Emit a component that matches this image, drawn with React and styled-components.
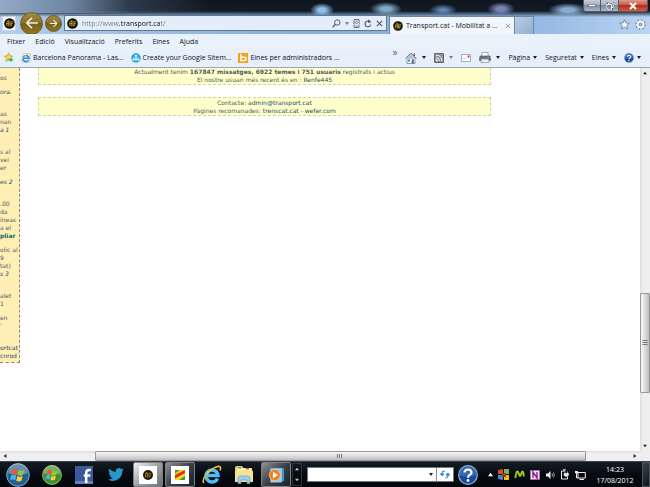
import styled, { createGlobalStyle, css } from "styled-components";

const GlobalStyle = createGlobalStyle`
    * {
        box-sizing: border-box;
    }

    body {
        margin: 0;
        overflow: hidden;
        color: #10141e;
        font-family: "Open Sans", "Noto Sans", sans-serif;
        font-size: 7px;
        line-height: 10px;
    }

    button, input {
        margin: 0;
        padding: 0;
        border: 0;
        color: inherit;
        background: none;
        font: inherit;
    }

    a {
        color: inherit;
        text-decoration: none;
    }

    svg {
        display: block;
        flex: none;
    }
`;

const Screen = styled.div`
    display: flex;
    flex-direction: column;
    min-height: 100vh;
`;

const Frame = styled.header`
    height: 34px;
    background:
        radial-gradient(ellipse 12px 7px at 322px 10px, #8fc1ee 30%, transparent),
        radial-gradient(ellipse 16px 7px at 386px 9px, #7fa9c4 30%, transparent),
        radial-gradient(ellipse 14px 6px at 443px 10px, #5d87b4 20%, transparent),
        radial-gradient(ellipse 14px 7px at 501px 9px, #7585b4 30%, transparent),
        radial-gradient(ellipse 20px 7px at 568px 10px, #88aad2 30%, transparent),
        linear-gradient(90deg, #93aac6, #6f86a3 70px, #4a5c7480 130px, transparent 210px) 0 0 / 100% 13px no-repeat,
        linear-gradient(#10161f 0, #121a26 11px, transparent 17px),
        linear-gradient(90deg, #b3cdea, #86aed8 45%, #8fb5e0 80%, #b9d4f1);
`;

const WindowButtons = styled.div`
    display: flex;
    justify-content: flex-end;
    height: 12px;
    padding-right: 2px;
`;

const WindowButton = styled.button`
    display: flex;
    align-items: center;
    justify-content: center;
    width: ${props => props.$close ? 29 : 18}px;
    height: 12px;
    border: 1px solid #4d5a6b;
    border-top: 0;
    border-left-width: ${props => props.$first ? 1 : 0}px;
    border-radius: ${props => props.$first ? "0 0 0 3px" : props.$close ? "0 0 3px 0" : "0"};
    background: ${props => props.$close
        ? "linear-gradient(#dd9a8d, #c75543 50%, #b5301c 50%, #d5593e)"
        : "linear-gradient(#c4ccd6, #a3adba 50%, #7d8a9a 50%, #a9b8c8)"};
`;

const NavRow = styled.div`
    display: flex;
    align-items: center;
    height: 22px;
    padding-left: 2px;
`;

const SiteButton = styled.button`
    display: flex;
    align-items: center;
    justify-content: center;
    width: 14px;
    height: 15px;
    background: #f4f7fb;
    border: 1px solid #c9d4e2;
`;

const RoundButton = styled.button`
    display: flex;
    align-items: center;
    justify-content: center;
    flex: none;
    width: ${props => props.$size}px;
    height: ${props => props.$size}px;
    margin-left: ${props => props.$size > 20 ? 4 : 2}px;
    border: 1px solid #6c5c2a;
    border-radius: 50%;
    background: linear-gradient(#a08a48, #8a7128 50%, #7a6015 50%, #8f7426);
`;

const AddressBar = styled.form`
    display: flex;
    align-items: center;
    flex: 1;
    gap: 4px;
    height: 16px;
    margin-left: 2px;
    padding: 0 3px 0 2px;
    border: 1px solid #5f7896;
    background: #e4eefa;
`;

const AddressInput = styled.input`
    flex: 1;
    min-width: 0;
    height: 14px;
    outline: none;
    color: transparent;
    caret-color: #111;
    background: linear-gradient(90deg, #737a84 37px, #0b0d12 37px, #0b0d12 79px, #737a84 79px);
    background-clip: text;
`;

const IconButton = styled.button`
    display: flex;
    align-items: center;
    justify-content: center;
`;

const TabStrip = styled.div`
    display: flex;
    align-items: flex-end;
    align-self: flex-end;
    width: 263px;
    height: 18px;
    padding-left: 2px;
`;

const Tab = styled.div`
    display: flex;
    align-items: center;
    gap: 3px;
    width: 126px;
    height: 18px;
    padding: 0 3px;
    border: 1px solid #6d86a5;
    border-bottom: 0;
    background: #f1f6fd;
    white-space: nowrap;
`;

const TabTitle = styled.span`
    flex: 1;
`;

const NewTab = styled.button`
    width: 19px;
    height: 18px;
    border: 1px solid #6d86a5;
    border-width: 1px 1px 0 0;
    background: linear-gradient(135deg, #b9cde4, #93aecd);
`;

const FrameTools = styled.div`
    display: flex;
    align-items: center;
    gap: 5px;
    height: 18px;
    margin-left: auto;
    padding: 0 4px 2px 0;
`;

const MenuBar = styled.nav`
    display: flex;
    align-items: center;
    gap: 10px;
    height: 16px;
    padding-left: 7px;
    background: #e9f1fb;
`;

const CommandRow = styled.div`
    display: flex;
    align-items: center;
    height: 18px;
    padding: 0 9px 2px 4px;
    border-bottom: 1px solid #9ba7b7;
    background: #e6effa;
    white-space: nowrap;
`;

const Favorites = styled.div`
    display: flex;
    align-items: center;
    flex: 1;
    gap: 7px;
`;

const Favorite = styled.a`
    display: flex;
    align-items: center;
    gap: 2px;
`;

const More = styled.button`
    align-self: flex-start;
    margin: -5px 8px 0 auto;
    color: #4b63a8;
    font-size: 10px;
`;

const Commands = styled.div`
    display: flex;
    align-items: center;
    gap: 8px;
`;

const Command = styled.button`
    display: flex;
    align-items: center;
    gap: ${props => props.$wide ? 5 : 3}px;
`;

const Caret = styled.span`
    border: 2px solid transparent;
    border-top: 3px solid ${props => props.$muted ? "#7a8088" : "#1a1f2b"};
    border-bottom: 0;
`;

const Viewport = styled.div`
    display: grid;
    grid-template-columns: 1fr 10px;
    grid-template-rows: 1fr 10px;
    flex: 1;
    background: #eeeeee;
`;

const Page = styled.div`
    display: flex;
    align-items: flex-start;
    min-width: 0;
    background: #ffffff;
    color: #4f5866;
    font-family: "DejaVu Sans", sans-serif;
    font-size: 6px;
    line-height: 8px;

    a {
        color: #134c6b;
    }
`;

const Sidebar = styled.aside`
    display: flex;
    flex-direction: column;
    width: 20px;
    padding: 6px 0 2px;
    overflow: hidden;
    border: 1px dashed #8f8a78;
    border-width: 0 1px 1px 0;
    background: #ffefb5;
    white-space: nowrap;
`;

const Paragraph = styled.div`
    margin-bottom: ${props => props.$spaced ? 14 : 6}px;

    &:last-child {
        margin-bottom: 0;
    }
`;

const Line = styled.div`
    height: 8px;

    ${props => props.$kind === "title" && css`
        color: #134c6b;
        font-style: italic;
    `}

    ${props => props.$kind === "link" && css`
        color: #134c6b;
    `}

    ${props => props.$kind === "more" && css`
        color: #0d5f5d;
        font-weight: bold;
    `}
`;

const Main = styled.main`
    flex: 1;
    margin: 0 149px 0 18px;
    text-align: center;
`;

const Notice = styled.section`
    padding-top: ${props => props.$top ? 0 : 1}px;
    margin-bottom: 12px;
    border: 1px dashed #d3d3a8;
    border-top-width: ${props => props.$top ? 0 : 1}px;
    border-bottom-width: 1px;
    background: #ffffcc;

    p {
        margin: 0;
    }
`;

const ScrollBar = styled.div`
    display: flex;
    flex-direction: ${props => props.$vertical ? "column" : "row"};
    background: ${props => props.$vertical
        ? "linear-gradient(90deg, #dedede, #efefef 3px)"
        : "linear-gradient(#dedede, #efefef 3px)"};
`;

const ScrollArrow = styled.button`
    display: flex;
    align-items: center;
    justify-content: center;
    flex: none;
    width: 10px;
    height: 10px;
`;

const ScrollSpace = styled.div`
    flex: ${props => props.$grow} 0 0;
`;

const ScrollThumb = styled.div`
    display: flex;
    align-items: center;
    justify-content: center;
    flex: ${props => props.$grow} 0 0;
    border: 1px solid #979797;
    border-radius: 1px;
    background: linear-gradient(${props => props.$vertical ? "90deg" : "180deg"}, #f7f7f7, #dddddd 50%, #bdbdbd);
`;

const TaskBar = styled.footer`
    display: flex;
    align-items: center;
    height: 26px;
    border-top: 1px solid #3d444c;
    background: linear-gradient(#141b23, #070b11 50%, #04070b);
    color: #ffffff;
`;

const Launchers = styled.div`
    display: flex;
    align-items: center;
    gap: 2px;
`;

const TaskButton = styled.button`
    display: flex;
    align-items: center;
    justify-content: center;
    width: ${props => props.$start ? 35 : 30}px;
    height: 25px;
    border: 1px solid transparent;

    ${props => props.$open && css`
        border-color: #7a7f85;
        border-radius: 2px;
        background: ${props.$active
            ? "linear-gradient(135deg, #f0f1f2, #9ea2a6 50%, #6c7176)"
            : "linear-gradient(135deg, #8c9196, #3b4148 50%, #1b2128)"};
    `}
`;

const Handle = styled.div`
    display: flex;
    flex-direction: column;
    align-items: center;
    justify-content: space-between;
    width: 10px;
    height: 23px;
    margin: 0 5px 0 1px;
    padding: 3px 0;
    border: 1px solid #2e353d;
`;

const SearchBox = styled.form`
    display: flex;
    align-items: center;
    flex: 1;
    height: 15px;
    border: 1px solid #73787e;
    background: #ffffff;
    color: #111;
`;

const SearchInput = styled.input`
    flex: 1;
    min-width: 0;
    height: 13px;
    padding: 0 3px;
    outline: none;
`;

const SearchGo = styled.button`
    display: flex;
    align-items: center;
    justify-content: center;
    width: 17px;
    height: 13px;
    margin-left: 3px;
    border-left: 1px solid #8a8f95;
`;

const HelpButton = styled.button`
    margin: 0 10px 0 4px;
`;

const Tray = styled.div`
    display: flex;
    align-items: center;
    gap: 5px;
`;

const Clock = styled.time`
    width: 38px;
    margin: 0 8px 0 10px;
    text-align: center;
    line-height: 11px;
`;

const ShowDesktop = styled.button`
    width: 8px;
    height: 25px;
    border: 1px solid #49515b;
    background: linear-gradient(135deg, #3b434d, #10161d);
`;

const SiteIcon = ({size}) => (
    <svg width={size} height={size} viewBox="0 0 12 12">
        <circle cx="6" cy="6" r="5.8" fill="#17130a" />
        <path d="M3.200 9V5q0-2 2-2v6M6.600 3v6M7.600 4.500q2-1.500 2 .5M7.500 6h2M8 6v3M2.500 6h3" fill="none" stroke="#c39b2a" strokeWidth="1" />
    </svg>
);

const Arrow = ({size, back}) => (
    <svg width={size} height={size} viewBox="0 0 12 12">
        <path d={back ? "M11 6H2M6 1.500L1.500 6 6 10.500" : "M1 6h9M6 1.500L10.500 6 6 10.500"} fill="none" stroke="#f3efe2" strokeWidth="1.400" />
    </svg>
);

const Cross = ({size, color, width = 1}) => (
    <svg width={size} height={size} viewBox="0 0 8 8">
        <path d="M1 1l6 6M7 1L1 7" fill="none" stroke={color} strokeWidth={width} />
    </svg>
);

const Triangle = ({rotate = 0, color = "#222", size = 4}) => (
    <svg width={size} height={size} viewBox="0 0 6 6">
        <path d="M0 5l3-4 3 4z" fill={color} transform={`rotate(${rotate} 3 3)`} />
    </svg>
);

const SearchIcon = () => (
    <svg width="9" height="9" viewBox="0 0 9 9">
        <circle cx="5.300" cy="3.500" r="2.700" fill="none" stroke="#4c5662" />
        <path d="M3.400 5.400L.7 8.200" stroke="#4c5662" strokeWidth="1.300" />
    </svg>
);

const CompatIcon = () => (
    <svg width="7" height="9" viewBox="0 0 7 9">
        <path d="M1 3.500V.5h5v3M1 5.500v3h5v-3M0 4.500l2-1 1.500 1 2-1L7 4.500M2.500 2h2M2.500 7h2" fill="none" stroke="#5c6672" strokeWidth=".9" />
    </svg>
);

const ReloadIcon = () => (
    <svg width="8" height="9" viewBox="0 0 8 9">
        <path d="M6.500 3.500A2.900 2.900 0 1 0 6.800 5.500" fill="none" stroke="#4c5662" strokeWidth="1.100" />
        <path d="M4 .4l3 2.100L4 4z" fill="#4c5662" />
    </svg>
);

const StarIcon = () => (
    <svg width="11" height="11" viewBox="0 0 12 12">
        <path d="M6 .8l1.500 3.500 3.800.3-2.900 2.500.9 3.800L6 8.900l-3.300 2 .9-3.800L.7 4.600l3.800-.3z" fill="#f8fbff" stroke="#5f6d80" strokeWidth=".8" />
    </svg>
);

const GearIcon = () => (
    <svg width="11" height="11" viewBox="0 0 12 12">
        <circle cx="6" cy="6" r="4.500" fill="#f8fbff" stroke="#5f6d80" strokeWidth="2.200" strokeDasharray="1.800 1.700" />
        <circle cx="6" cy="6" r="3.700" fill="#f8fbff" stroke="#f8fbff" strokeWidth="1.200" />
        <circle cx="6" cy="6" r="1.700" fill="#a9c4e4" stroke="#5f6d80" strokeWidth=".8" />
    </svg>
);

const AddFavoriteIcon = () => (
    <svg width="10" height="11" viewBox="0 0 10 11">
        <path d="M4.500.8l1.300 3 3.200.3-2.400 2.200.7 3.200-2.800-1.700-2.800 1.700.7-3.200L.2 4.100l3.100-.3z" fill="#ffd13b" stroke="#c48c12" strokeWidth=".6" />
        <path d="M3 6.500h3V4.700l3.800 3L6 10.600V8.800H3z" fill="#45b43a" stroke="#e9f6e4" strokeWidth=".5" />
    </svg>
);

const ExplorerIcon = ({size, page}) => (
    <svg width={size} height={size} viewBox="0 0 20 20">
        {page && <path d="M4 1h10l4 4v14H4z" fill="#fff" stroke="#9aa7b5" />}
        <path d="M15.500 13.500A6 6 0 1 1 16 10.500H5" fill="none" stroke={page ? "#2b8fd9" : "#4fbdf3"} strokeWidth="3.400" />
        <path d="M2 18C-1 15 6 5 14 2c4-1.500 5.500 0 4 3.500" fill="none" stroke="#f2bd2d" strokeWidth="1.600" />
    </svg>
);

const SitemapIcon = () => (
    <svg width="10" height="10" viewBox="0 0 12 12">
        <circle cx="6" cy="6" r="5.700" fill="#2ba5df" />
        <path d="M6 4v2M3 8V6h6v2M6 6v2" fill="none" stroke="#fff" strokeWidth=".7" />
        <path d="M4.800 2.500h2.400v2H4.800zM1.900 7h2.200v2H1.900zM4.900 7h2.200v2H4.900zM7.900 7h2.200v2H7.900z" fill="#fff" />
    </svg>
);

const BingIcon = () => (
    <svg width="10" height="10" viewBox="0 0 10 10">
        <path d="M0 0h10v10H0z" fill="#f7a11a" />
        <path d="M2.800 1v6.500h3.200q2 0 2-1.600T6 4.300H2.800" fill="none" stroke="#fff" strokeWidth="1.400" />
    </svg>
);

const HomeIcon = () => (
    <svg width="12" height="12" viewBox="0 0 12 12">
        <path d="M8.500 1.500h1.500v3H8.500z" fill="#a24a42" />
        <path d="M2 6h8v5.500H2z" fill="#f2f5f8" stroke="#68788c" strokeWidth=".7" />
        <path d="M.5 6.500L6 1l5.500 5.500" fill="#b5c4d6" stroke="#6c82a0" strokeWidth="1" />
        <path d="M3 7.500h2v2H3z" fill="#4b83c4" />
        <path d="M6.800 7.500h2v4h-2z" fill="#4c6076" />
    </svg>
);

const FeedIcon = () => (
    <svg width="10" height="10" viewBox="0 0 10 10">
        <path d="M.5.5h9v9h-9z" fill="#8b9197" stroke="#62686e" />
        <circle cx="2.700" cy="7.300" r="1" fill="#fff" />
        <path d="M2 4.500q3.500 0 3.500 3.500M2 2.200q5.800 0 5.800 5.800" fill="none" stroke="#fff" strokeWidth=".9" />
    </svg>
);

const MailIcon = () => (
    <svg width="10" height="8" viewBox="0 0 10 8">
        <path d="M.5.5h9v7h-9z" fill="#fbfcfd" stroke="#a5adb8" />
        <path d="M6.500 1.500h2v2h-2z" fill="#d2483c" />
        <path d="M2 4.500h3" stroke="#b9c0ca" strokeWidth=".7" />
    </svg>
);

const PrinterIcon = () => (
    <svg width="12" height="11" viewBox="0 0 12 11">
        <path d="M3 .5h6V5H3z" fill="#fff" stroke="#848b94" strokeWidth=".7" />
        <path d="M1 4h10l.7 4.500H.3z" fill="#6d757f" stroke="#4c535c" strokeWidth=".6" />
        <path d="M2.500 7h7l.7 3.500H1.800z" fill="#e9edf1" stroke="#848b94" strokeWidth=".6" />
        <path d="M8.500 5h1.300v1H8.500z" fill="#62c252" />
    </svg>
);

const HelpIcon = ({size}) => (
    <svg width={size} height={size} viewBox="0 0 20 20">
        <circle cx="10" cy="10" r="9.300" fill="#174b99" stroke="#91b6dc" strokeWidth="1.200" />
        <path d="M1.500 10a8.500 8.500 0 0 1 17 0q-8.500 3-17 0z" fill="#4b7fc2" opacity=".6" />
        <path d="M6.500 7.500Q6.800 4.500 10 4.500t3.500 3q0 1.500-2 2.600-1.500.9-1.500 2.600" fill="none" stroke="#fff" strokeWidth="2.200" />
        <circle cx="10" cy="15.500" r="1.400" fill="#fff" />
    </svg>
);

const WindowsOrb = ({size, edge, rim}) => (
    <svg width={size} height={size} viewBox="0 0 24 24">
        <circle cx="12" cy="12" r="11.300" fill={edge} stroke={rim} strokeWidth="1" />
        <path d="M2 10a10 10 0 0 1 20 0q-10 4-20 0z" fill="#fff" opacity=".3" />
        <path d="M6.500 6.500q2.500-1.600 5.200 0l-1 5q-2.500-1.400-5.200 0z" fill="#ea5a2b" />
        <path d="M12.600 7q2.500 1.500 5.500 0l-1.200 5q-2.700 1.500-5.300 0z" fill="#93c83e" />
        <path d="M5.200 12.500q2.700-1.400 5.200 0l-1.200 4.800q-2.400-1.400-5.100 0z" fill="#4bb1ea" />
        <path d="M11.400 13q2.500 1.500 5.300 0l-1.200 4.700q-2.700 1.400-5.300 0z" fill="#fdcd35" />
    </svg>
);

const FacebookIcon = () => (
    <svg width="18" height="18" viewBox="0 0 18 18">
        <path d="M0 0h18v18H0z" fill="#3c5a99" />
        <path d="M0 15h18v3H0z" fill="#6380b9" />
        <path d="M11.200 17V7q0-3 3-3h1.600M8.800 9.500h6.500" fill="none" stroke="#fff" strokeWidth="2.500" />
    </svg>
);

const TwitterIcon = () => (
    <svg width="16" height="13" viewBox="0 0 24 20">
        <path d="M24 2.400a10 10 0 0 1-2.800.8A4.900 4.900 0 0 0 23.300.5a10 10 0 0 1-3.100 1.200 4.900 4.900 0 0 0-8.400 4.500A14 14 0 0 1 1.700 1a4.900 4.900 0 0 0 1.500 6.600A5 5 0 0 1 1 7a4.900 4.900 0 0 0 4 4.900 5 5 0 0 1-2.300 0 4.900 4.900 0 0 0 4.600 3.500A10 10 0 0 1 0 17.500 14 14 0 0 0 21.500 5z" fill="#2498cf" />
    </svg>
);

const TransportTile = () => (
    <svg width="18" height="18" viewBox="0 0 18 18">
        <path d="M0 0h18v18H0z" fill="#fff" />
        <circle cx="9" cy="9" r="5" fill="#201808" />
        <path d="M6.500 11.500v-3q0-2 1.500-2v5M9 6.500v5M10.200 7.500q1.800-1 1.800.5M10.500 9H12M10.800 9v2.500" fill="none" stroke="#b48c27" strokeWidth=".8" />
    </svg>
);

const RainbowTile = () => (
    <svg width="18" height="18" viewBox="0 0 18 18">
        <path d="M0 0h18v18H0z" fill="#fff" />
        <path d="M4 4h10v10H4z" fill="#ffd90f" />
        <path d="M4 4h5L4 7.500z" fill="#35a13b" />
        <path d="M14 4v3L4 12.500V9z" fill="#e8291c" />
        <path d="M14 10v4H8z" fill="#35a13b" />
    </svg>
);

const FolderIcon = () => (
    <svg width="20" height="19" viewBox="0 0 20 19">
        <path d="M1 2.500L2 1h6l1.500 2H18l1 14H1z" fill="#e8c766" />
        <path d="M3 3.500h14V9H3z" fill="#fffbe6" />
        <path d="M4 2h3v1.500H4z" fill="#4db246" />
        <path d="M12 3h3v1.500h-3z" fill="#dc4838" />
        <path d="M1 6q9-2 18 0v11H1z" fill="#f8e292" />
        <path d="M4 18.500V13q0-2 2-2h8q2 0 2 2v5.500h-3V15H7v3.500z" fill="#9ad0ec" stroke="#5b9cc2" strokeWidth=".6" />
    </svg>
);

const PlayerIcon = () => (
    <svg width="17" height="16" viewBox="0 0 19 18">
        <path d="M6 1h12v15H6z" fill="#4292c4" />
        <path d="M3 2h12v15H3z" fill="#8ec9e8" stroke="#d2ebf6" strokeWidth=".6" />
        <circle cx="7.500" cy="9" r="6.300" fill="#f2801f" stroke="#ffd3a1" strokeWidth=".7" />
        <path d="M5.500 5.300L11.300 9l-5.800 3.700z" fill="#fff" />
    </svg>
);

const RefreshIcon = () => (
    <svg width="10" height="9" viewBox="0 0 12 10">
        <path d="M5.500 1Q2 1 2.500 5M.5 3.800l2 2.400 2.200-2.100M6.500 9q3.500 0 3-4M7.300 6.200l2.200-2.400 2 2.400" fill="none" stroke="#2d79cf" strokeWidth="1.400" />
    </svg>
);

const FlagTrayIcon = () => (
    <svg width="11" height="11" viewBox="0 0 11 11">
        <path d="M0 1l5-1v5H0z" fill="#e3472c" />
        <path d="M6 0h5v5H6z" fill="#77b944" />
        <path d="M0 6h5v5l-5-1z" fill="#3f8bd0" />
        <path d="M6 6h5v5H6z" fill="#efb62d" />
        <path d="M4 4h4v4H4z" fill="#a2361f" />
    </svg>
);

const WaveTrayIcon = () => (
    <svg width="11" height="9" viewBox="0 0 11 9">
        <path d="M1.200 8L2.500 2.500q.8-1.800 1.800 0l1.200 3q.5.800 1 0l1.200-3q1-1.800 1.600 0L9.800 6.500" fill="none" stroke="#8fc31f" strokeWidth="2" />
    </svg>
);

const NoteTrayIcon = () => (
    <svg width="10" height="10" viewBox="0 0 10 10">
        <path d="M.5.5h9v9h-9z" fill="#f5e8f5" stroke="#b662b8" />
        <path d="M3 8V2l4 6V2" fill="none" stroke="#7d2482" strokeWidth="1.400" />
    </svg>
);

const SpeakerIcon = () => (
    <svg width="10" height="10" viewBox="0 0 10 10">
        <path d="M1 3.500h2L5.500 1v8L3 6.500H1z" fill="#eee" />
        <path d="M7 3.500q1 1.500 0 3M8.500 2.500q1.700 2.500 0 5" fill="none" stroke="#ddd" strokeWidth=".7" />
    </svg>
);

const PowerIcon = () => (
    <svg width="10" height="11" viewBox="0 0 10 11">
        <path d="M5 2H1.500v8h6V8M3 .8h3" fill="none" stroke="#eee" strokeWidth="1" />
        <path d="M4 4.500h4.500v1.200q0 1.800-2.200 1.800T4 5.700zM5 2.500v2M7.500 2.500v2" fill="#eee" stroke="#eee" strokeWidth=".7" />
    </svg>
);

const NetworkIcon = () => (
    <svg width="11" height="10" viewBox="0 0 11 10">
        <path d="M3 2.500h7.300V8H3zM4.500 9.500H9M1.500 1v2.500M.5 1v2h2V1M1.500 3.500V8H3" fill="none" stroke="#eee" />
    </svg>
);

const menus = ["Fitxer", "Edició", "Visualització", "Preferits", "Eines", "Ajuda"];

const favorites = [
    {title: "Barcelona Panorama - Las...", icon: <ExplorerIcon size={10} page />},
    {title: "Create your Google Sitem...", icon: <SitemapIcon />},
    {title: "Eines per administradors ...", icon: <BingIcon />},
];

const news = [
    {lines: [["os"]]},
    {lines: [["ora.", "title"]], spaced: true},
    {lines: [["as"], ["nan"], ["a 1", "title"]], spaced: true},
    {lines: [["s al"], ["vei"], ["er"]]},
    {lines: [["es 2", "title"]], spaced: true},
    {lines: [[".00"], ["da"], ["íneas"], ["a el"], ["pliar", "more"]]},
    {lines: [["olic al"], ["9"], ["tat)"], ["s 3", "title"]], spaced: true},
    {lines: [["alet"], ["1"]]},
    {lines: [["en"], ["'"]], spaced: true},
    {lines: [["ortcat", "link"], ["cnrod", "link"]]},
];

const BrowserFrame = () => (
    <Frame>
        <WindowButtons>
            <WindowButton $first aria-label="Minimitza">
                <svg width="8" height="3" viewBox="0 0 8 3">
                    <path d="M.5.5h7v2h-7z" fill="#fff" stroke="#4f5966" strokeWidth=".6" />
                </svg>
            </WindowButton>
            <WindowButton aria-label="Restaura">
                <svg width="8" height="8" viewBox="0 0 8 8">
                    <path d="M2.500 2V.8h4.700v4.700H6M.8 2.500h4.700v4.700H.8z" fill="none" stroke="#4f5966" strokeWidth="2" />
                    <path d="M2.500 2V.8h4.700v4.700H6M.8 2.500h4.700v4.700H.8z" fill="none" stroke="#fff" />
                </svg>
            </WindowButton>
            <WindowButton $close aria-label="Tanca"><Cross size={8} color="#fff" width={1.800} /></WindowButton>
        </WindowButtons>
        <NavRow>
            <SiteButton aria-label="Transport.cat"><SiteIcon size={11} /></SiteButton>
            <RoundButton $size={23} aria-label="Enrere"><Arrow size={14} back /></RoundButton>
            <RoundButton $size={17} aria-label="Endavant"><Arrow size={9} /></RoundButton>
            <AddressBar>
                <SiteIcon size={11} />
                <AddressInput aria-label="Adreça" defaultValue="http://www.transport.cat/" />
                <IconButton type="button" aria-label="Cerca"><SearchIcon /></IconButton>
                <Caret $muted />
                <IconButton type="button" aria-label="Compatibilitat"><CompatIcon /></IconButton>
                <IconButton type="button" aria-label="Actualitza"><ReloadIcon /></IconButton>
                <IconButton type="button" aria-label="Atura"><Cross size={7} color="#4c5662" width={1.200} /></IconButton>
            </AddressBar>
            <TabStrip>
                <Tab>
                    <SiteIcon size={10} />
                    <TabTitle>Transport.cat - Mobilitat a ...</TabTitle>
                    <IconButton aria-label="Tanca la pestanya"><Cross size={6} color="#7b8490" /></IconButton>
                </Tab>
                <NewTab aria-label="Pestanya nova" />
                <FrameTools>
                    <IconButton aria-label="Favorits"><StarIcon /></IconButton>
                    <IconButton aria-label="Opcions"><GearIcon /></IconButton>
                </FrameTools>
            </TabStrip>
        </NavRow>
    </Frame>
);

const BrowserBars = () => (
    <>
        <MenuBar>
            {menus.map(menu => <button key={menu}>{menu}</button>)}
        </MenuBar>
        <CommandRow>
            <Favorites>
                <IconButton aria-label="Afegeix a favorits"><AddFavoriteIcon /></IconButton>
                {favorites.map(({title, icon}) => (
                    <Favorite key={title} href="#">{icon}{title}</Favorite>
                ))}
                <More>»</More>
            </Favorites>
            <Commands>
                <Command $wide aria-label="Inici"><HomeIcon /><Caret /></Command>
                <Command $wide aria-label="Canals"><FeedIcon /><Caret $muted /></Command>
                <Command aria-label="Correu"><MailIcon /></Command>
                <Command $wide aria-label="Imprimeix"><PrinterIcon /><Caret /></Command>
                <Command>Pàgina<Caret /></Command>
                <Command>Seguretat<Caret /></Command>
                <Command>Eines<Caret /></Command>
                <Command aria-label="Ajuda"><HelpIcon size={10} /><Caret /></Command>
            </Commands>
        </CommandRow>
    </>
);

const ForumPage = () => (
    <Page>
        <Sidebar>
            {news.map(({lines, spaced}, i) => (
                <Paragraph key={i} $spaced={spaced}>
                    {lines.map(([text, kind]) => <Line key={text} $kind={kind}>{text}</Line>)}
                </Paragraph>
            ))}
        </Sidebar>
        <Main>
            <Notice $top>
                <p>Actualment tenim <b>167847 missatges, 6922 temes i 751 usuaris</b> registrats i actius</p>
                <p>El nostre usuari més recent és en : <a href="#">Renfe445</a></p>
            </Notice>
            <Notice>
                <p>Contacte: <a href="#">admin@transport.cat</a></p>
                <p>Pàgines recomanades: <a href="#">trenscat.cat</a> - <a href="#">wefer.com</a></p>
            </Notice>
        </Main>
    </Page>
);

const Grip = ({vertical}) => (
    <svg width="6" height="6" viewBox="0 0 6 6">
        <path d={vertical ? "M.5 .5h5M.5 2.500h5M.5 4.500h5" : "M.5 1v4M2.500 1v4M4.500 1v4"} stroke="#6b6b6b" strokeWidth=".9" />
    </svg>
);

const Bar = ({vertical, before, thumb, after}) => (
    <ScrollBar $vertical={vertical}>
        <ScrollArrow aria-label="Enrere"><Triangle rotate={vertical ? 0 : -90} /></ScrollArrow>
        <ScrollSpace $grow={before} />
        <ScrollThumb $grow={thumb} $vertical={vertical}><Grip vertical={vertical} /></ScrollThumb>
        <ScrollSpace $grow={after} />
        <ScrollArrow aria-label="Endavant"><Triangle rotate={vertical ? 180 : 90} /></ScrollArrow>
    </ScrollBar>
);

const Taskbar = () => (
    <TaskBar>
        <Launchers>
            <TaskButton $start aria-label="Inici"><WindowsOrb size={24} edge="#245f8f" rim="#79b5d8" /></TaskButton>
            <TaskButton aria-label="Media Center"><WindowsOrb size={20} edge="#3f8d2b" rim="#a3d77c" /></TaskButton>
            <TaskButton aria-label="Facebook"><FacebookIcon /></TaskButton>
            <TaskButton aria-label="Twitter"><TwitterIcon /></TaskButton>
            <TaskButton $open $active aria-label="Transport.cat"><TransportTile /></TaskButton>
            <TaskButton $open aria-label="Lloc ancorat"><RainbowTile /></TaskButton>
            <TaskButton aria-label="Internet Explorer"><ExplorerIcon size={20} /></TaskButton>
            <TaskButton aria-label="Explorador"><FolderIcon /></TaskButton>
            <TaskButton $open aria-label="Reproductor"><PlayerIcon /></TaskButton>
        </Launchers>
        <Handle>
            <Triangle color="#c4c8cc" />
            <Triangle color="#c4c8cc" rotate={180} />
        </Handle>
        <SearchBox>
            <SearchInput aria-label="Cerca" />
            <Caret />
            <SearchGo type="button" aria-label="Vés-hi"><RefreshIcon /></SearchGo>
        </SearchBox>
        <HelpButton aria-label="Ajuda"><HelpIcon size={20} /></HelpButton>
        <Tray>
            <IconButton aria-label="Icones amagades"><Triangle color="#fff" size={5} /></IconButton>
            <FlagTrayIcon />
            <WaveTrayIcon />
            <NoteTrayIcon />
            <SpeakerIcon />
            <PowerIcon />
            <NetworkIcon />
        </Tray>
        <Clock dateTime="2012-08-17T14:23">14:23<br />17/08/2012</Clock>
        <ShowDesktop aria-label="Mostra l'escriptori" />
    </TaskBar>
);

export default function App() {
    return (
        <Screen>
            <GlobalStyle />
            <BrowserFrame />
            <BrowserBars />
            <Viewport>
                <ForumPage />
                <Bar vertical before={217} thumb={99} after={48} />
                <Bar before={85} thumb={491} after={44} />
            </Viewport>
            <Taskbar />
        </Screen>
    );
}
